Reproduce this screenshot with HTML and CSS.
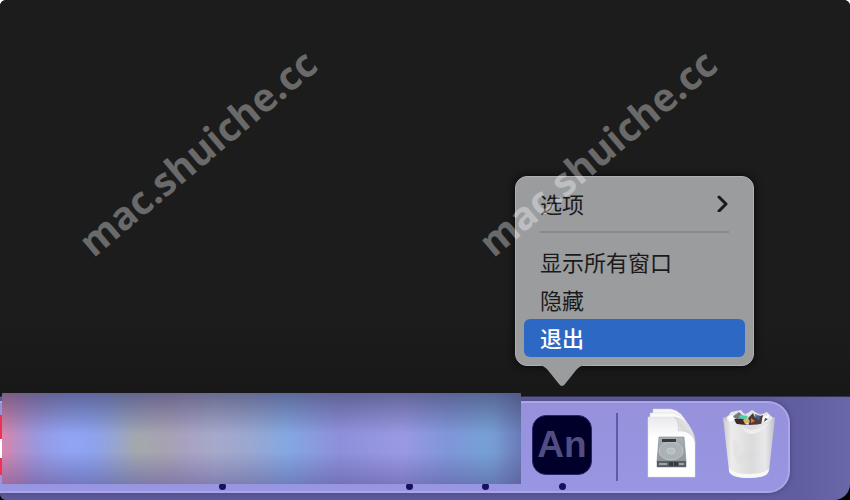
FILE: index.html
```html
<!DOCTYPE html>
<html lang="zh-CN">
<head>
    <meta charset="UTF-8">
    <meta name="viewport" content="width=device-width, initial-scale=1.0">
    <title>Dock</title>
    <link rel="stylesheet" href="styles.css">
</head>
<body>
    <div class="screen">
        <main class="window"></main>
        <footer class="desktop">
            <nav class="dock">
                <div class="running">
                    <span class="red-app"></span>
                    <span class="dot dot-one"></span>
                    <span class="dot dot-two"></span>
                    <span class="dot dot-three"></span>
                    <div class="blurred"></div>
                </div>
                <div class="app">
                    <button class="app-icon" type="button">An</button>
                    <span class="dot"></span>
                    <div class="menu">
                        <button class="item" type="button">选项
                            <svg width="12" height="18" viewBox="0 0 12 18"><path d="M2 3 L9 10 L2 17" fill="none" stroke="#1a1a1b" stroke-width="3" stroke-linecap="round" stroke-linejoin="round"/></svg>
                        </button>
                        <hr>
                        <button class="item" type="button">显示所有窗口</button>
                        <button class="item" type="button">隐藏</button>
                        <button class="item selected" type="button">退出</button>
                        <svg class="arrow" width="52" height="22" viewBox="0 0 52 22">
                            <path d="M0 0 C9 0 11 4 15 9 L23 19 Q26 23 29 19 L37 9 C41 4 43 0 52 0 Z" fill="#9b9c9e"/>
                        </svg>
                    </div>
                </div>
                <span class="separator"></span>
                <!-- stack of disk images -->
                <svg class="files" width="50" height="72" viewBox="0 0 50 72">
                    <defs>
                        <linearGradient id="paper" x1="0" y1="0" x2="0" y2="1">
                            <stop offset="0" stop-color="#e9e9ec"/>
                            <stop offset="0.35" stop-color="#ffffff"/>
                        </linearGradient>
                        <linearGradient id="fold" x1="0" y1="1" x2="1" y2="0">
                            <stop offset="0" stop-color="#ffffff"/>
                            <stop offset="0.5" stop-color="#d9d9dc"/>
                            <stop offset="1" stop-color="#f8f8f8"/>
                        </linearGradient>
                        <linearGradient id="disk" x1="0" y1="0" x2="0" y2="1">
                            <stop offset="0" stop-color="#a8b0b4"/>
                            <stop offset="1" stop-color="#899196"/>
                        </linearGradient>
                    </defs>
                    <path d="M6 1 H24 Q35 3 40 16 V60 H6 Z" fill="#f5f5f7" stroke="#d4d4da" stroke-width="0.5"/>
                    <path d="M3 5 H26 Q40 9 45 24 V64 H3 Z" fill="#fafafa" stroke="#d4d4da" stroke-width="0.5"/>
                    <path d="M1 9 H26 C36 10 47 20 48 34 V69 H1 Z" fill="url(#paper)" stroke="#dedee4" stroke-width="0.5"/>
                    <path d="M27 9 C31 12 32 17 31 23 C39 22 46 26 48 34 C47 20 38 11 27 9 Z" fill="url(#fold)" stroke="#c9c9cc" stroke-width="0.5"/>
                    <path d="M12 29 H37 L39 53 V59 H10 V53 Z" fill="url(#disk)" stroke="#80888c" stroke-width="0.6"/>
                    <ellipse cx="24" cy="43" rx="12" ry="9" fill="#aab2b6" stroke="#c3cacc" stroke-width="0.8"/>
                    <ellipse cx="24" cy="43" rx="4" ry="3" fill="#b5bdc0" stroke="#ccd2d5" stroke-width="0.8"/>
                    <path d="M15 31 H29 V34 H15 Z" fill="#343b40"/>
                    <path d="M10 53 H39 V59 H10 Z" fill="#596065"/>
                    <path d="M12 55 H20 V57 H12 Z M32 55 H37 V57 H32 Z" fill="#9da4a7"/>
                    <path d="M23 54 V58 M25 54 V58 M28 54 V58 M30 54 V58" stroke="#15191c"/>
                </svg>
                <!-- full trash -->
                <svg class="trash" width="54" height="70" viewBox="0 0 54 70">
                    <defs>
                        <linearGradient id="can" x1="0" y1="0" x2="1" y2="0">
                            <stop offset="0" stop-color="#c9c9cf"/>
                            <stop offset="0.16" stop-color="#ececec"/>
                            <stop offset="0.55" stop-color="#dcdbdc"/>
                            <stop offset="0.82" stop-color="#e8e8ea"/>
                            <stop offset="1" stop-color="#bebec8"/>
                        </linearGradient>
                    </defs>
                    <path d="M1 8 Q10 3 27 3 Q44 3 53 8 L51 14 H3 Z" fill="#b9b9cd"/>
                    <path d="M4 9 L9 2 L19 0 L23 5 L30 0 L38 5 L45 2 L51 8 L46 14 H8 Z" fill="#e6e6e8"/>
                    <path d="M10 7 L17 2 L21 6 L15 9 Z M33 4 L39 6 L37 11 L32 9 Z" fill="#777a80"/>
                    <path d="M12 9 L22 8 L24 15 H15 Z" fill="#3c2a31"/>
                    <path d="M18 5 L26 6 L24 10 L17 8 Z" fill="#50cfae"/>
                    <path d="M26 8 L31 3 L33 8 L41 5 L39 15 H27 Z" fill="#4e3a37"/>
                    <path d="M34 6 L39 7 L36 11 Z" fill="#3263a8"/>
                    <path d="M29 8 L33 11 L29 13 Z" fill="#db7540"/>
                    <path d="M21 10 L26 8 L28 12 L23 14 Z" fill="#e2b550"/>
                    <path d="M5 7 L10 5 L13 9 L8 12 Z M41 7 L47 5 L45 12 L40 11 Z" fill="#ffffff"/>
                    <path d="M43 8 L46 9 L42 12 Z" fill="#4b4d52"/>
                    <path d="M1 7 Q5 14 27 15 Q49 14 53 7 L47 61 Q45 68 27 68 Q9 68 7 61 Z" fill="url(#can)"/>
                    <path d="M20 15 Q21 19 29 20 Q38 19 47 13 Q38 25 28 24 Q21 22 20 15" fill="#ededee"/>
                    <path d="M11 28 Q20 36 15 47 Q25 38 38 42 Q30 52 16 54 Q9 42 11 28" fill="#d9d7d9" opacity="0.3"/>
                    <path d="M7 58 Q11 64 27 64 Q43 64 47 58 L46 62 Q44 68 27 68 Q9 68 7 61 Z" fill="#f8f8f8"/>
                </svg>
            </nav>
        </footer>
        <div class="watermarks">
            <span>mac.shuiche.cc</span>
            <span>mac.shuiche.cc</span>
        </div>
    </div>
</body>
</html>
```
FILE: styles.css
```css
* { box-sizing: border-box; }

html { background: #fff; }

body {
    margin: 0;
    font-family: "Liberation Sans", "Noto Sans CJK SC", sans-serif;
    background: linear-gradient(#fff 50%, #000 50%);
}

.screen {
    position: relative;
    display: flex;
    flex-direction: column;
    min-height: 100vh;
    overflow: hidden;
    border-radius: 6px 6px 16px 6px;
    background: #1b1b1b;
}

.window {
    flex: 1;
    background: linear-gradient(#1c1c1c 80%, #181818);
}

.desktop {
    padding: 4px 60px 7px 0;
    background: linear-gradient(90deg, #5c5b9a 75%, #605da0 94%, #6a67a9);
    border-top: 1px solid #34324e;
}

.dock {
    display: flex;
    height: 92px;
    background: linear-gradient(#9691db, #9896e2);
    border: 2px solid #aaa6e7;
    border-left: 0;
    border-radius: 0 22px 22px 0;
    box-shadow: 0 0 5px #46437c;
}

.running {
    position: relative;
    flex: 1;
}

.red-app {
    position: absolute;
    left: 0;
    top: 12px;
    width: 2px;
    height: 60px;
    background: linear-gradient(#ee3158 40%, #fff 40%, #fff 72%, #ee3158 72%);
}

.blurred {
    position: absolute;
    inset: -10px 0 7px 2px;
    background:
        linear-gradient(rgba(65, 66, 105, 0.6), rgba(65, 66, 105, 0) 45%, rgba(65, 66, 105, 0) 65%, rgba(78, 70, 135, 0.4)),
        linear-gradient(90deg, transparent 95%, rgba(85, 90, 150, 0.4)),
        radial-gradient(circle at 70px 48px, #90a5f4, transparent 65px),
        radial-gradient(circle at 138px 52px, #a5a9aa, transparent 50px),
        linear-gradient(90deg, #d687ae, #a28bcc 7%, #8799e5 15%, #8e9fce 22%, #a99bb9 31%, #a6a9cb 41%, #9ca7cf 47%, #84a7e2 55%, #8e8fda 65%, #9999e3 77%, #7f96d9 86%, #76a0d5 93%, #7790cb);
}

.dot {
    position: absolute;
    top: 80px;
    width: 7px;
    height: 7px;
    border-radius: 50%;
    background: #17125f;
}

.dot-one { left: 42%; }
.dot-two { left: 78%; }
.dot-three { left: 92.5%; }

.app {
    position: relative;
    width: 60px;
    margin: 12px 0 0 11px;
}

.app-icon {
    display: block;
    width: 60px;
    height: 60px;
    padding: 0;
    border: 1px solid #29256a;
    border-radius: 14px;
    background: #01002a;
    color: #504d80;
    font: bold 37px/56px "Liberation Sans", Arial, sans-serif;
    text-align: center;
}

.app .dot {
    top: 68px;
    left: 27px;
}

.menu {
    position: absolute;
    left: -17px;
    bottom: 125px;
    width: 239px;
    padding: 8px;
    border: 1px solid #b0b0b2;
    border-radius: 12px;
    background: #9b9c9e;
    box-shadow: 0 0 8px #080808;
}

.item {
    display: flex;
    align-items: center;
    justify-content: space-between;
    width: 100%;
    height: 38px;
    padding: 0 16px 2px;
    border: 0;
    border-radius: 6px;
    background: none;
    color: #1a1a1b;
    font: 22px/36px "Noto Sans CJK SC", sans-serif;
    text-align: left;
}

.item.selected {
    background: #2e68c5;
    color: #fff;
    font-weight: 500;
}

.menu hr {
    height: 2px;
    margin: 8px 16px 10px;
    border: 0;
    background: #89898b;
}

.arrow {
    position: absolute;
    left: 20px;
    top: 100%;
}

.separator {
    width: 2px;
    height: 68px;
    margin: 10px 0 0 24px;
    background: #5e5aac;
}

.files {
    margin: 5px 0 0 29px;
}

.trash {
    margin: 7px 12px 0 25px;
}

.watermarks {
    position: absolute;
    left: -3px;
    top: 130px;
    display: flex;
    pointer-events: none;
}

.watermarks span {
    width: 400px;
    color: rgba(255, 255, 255, 0.35);
    font: bold 39px/44px "Open Sans", sans-serif;
    text-align: center;
    transform: rotate(-40deg);
}
```
